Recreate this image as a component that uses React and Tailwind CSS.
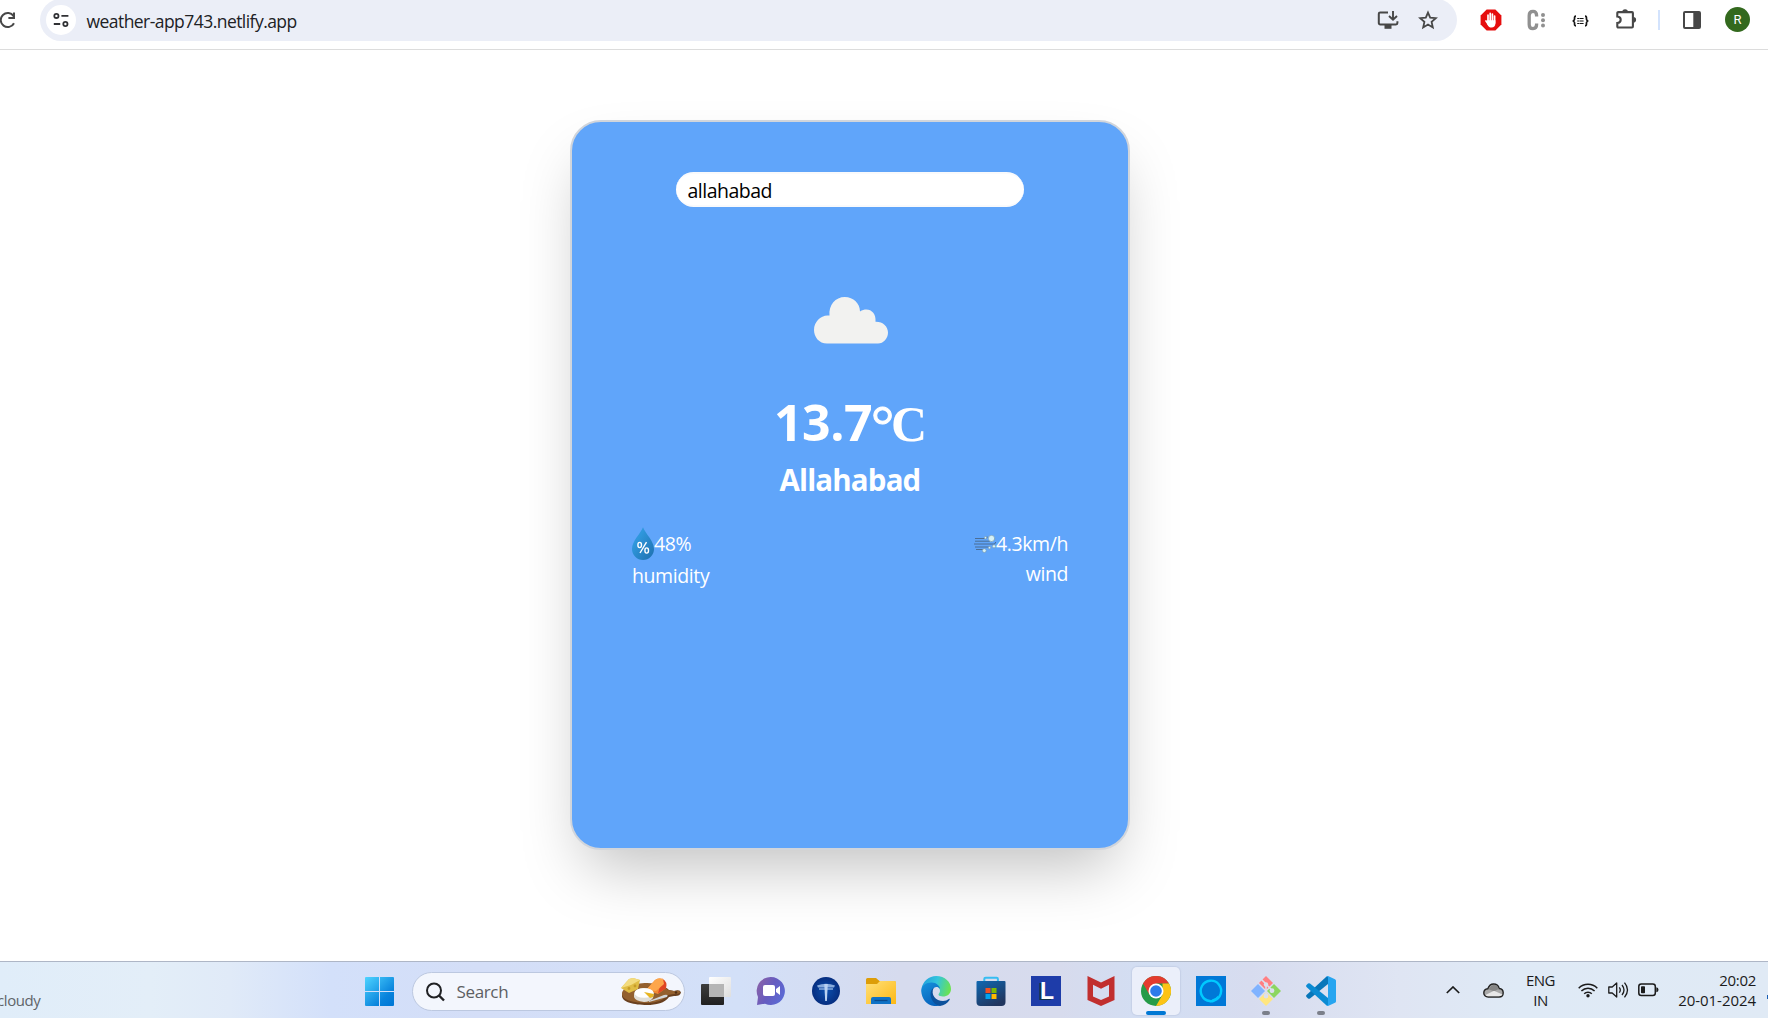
import React from "react";

const Reload = () => (
  <svg className="-ml-[1px] h-[18px] w-[18px] shrink-0" viewBox="0 0 18 18" fill="none" stroke="#474747" strokeWidth="2">
    <path d="M14.6 5.2A7 7 0 1 0 15 12.2" />
    <path d="M15 1.5V7H9.4" />
  </svg>
);

const Tune = () => (
  <svg className="h-4 w-4" viewBox="0 0 16 16" fill="none" stroke="#303134" strokeWidth="1.8">
    <circle cx="3.4" cy="3.9" r="2.1" />
    <path d="M8.4 3.9H15.4M0.8 12H7.2" />
    <circle cx="12.4" cy="12" r="2.1" />
  </svg>
);

const Install = () => (
  <svg className="h-5 w-[22px]" viewBox="0 0 22 20" fill="none" stroke="#474747" strokeWidth="2">
    <path d="M11 2.4H3.2A1.4 1.4 0 0 0 1.8 3.8V13a1.4 1.4 0 0 0 1.4 1.4H19a1.4 1.4 0 0 0 1.4-1.4V11.2" />
    <path d="M16 1v8.4M12 6l4 3.8L20 6" strokeWidth="1.9" />
    <path d="M7.5 15h7v3.8h-7z" fill="#474747" stroke="none" />
  </svg>
);

const Star = () => (
  <svg className="h-5 w-5" viewBox="0 0 20 20" fill="none" stroke="#474747" strokeWidth="1.8">
    <path d="M10 2.6l2.2 5.1 5.6.5-4.2 3.7 1.2 5.5-4.8-2.9-4.8 2.9 1.2-5.5-4.2-3.7 5.6-.5z" />
  </svg>
);

const Blocker = () => (
  <svg className="h-[22px] w-[22px]" viewBox="0 0 22 22">
    <path d="M6.6.6h8.8l6 6v8.8l-6 6H6.6l-6-6V6.6z" fill="#e60d0d" />
    <g stroke="#fff" strokeWidth="1.7" strokeLinecap="round">
      <path d="M8 6.2v7M10.2 4.4v8M12.4 5v8M14.6 7v7" />
      <path d="M6 12l3 4.2" />
    </g>
    <path d="M7.300 11.2h8.100v3.400c0 2.800-1.600 4-3.800 4-2 0-3-.8-4.300-3.200z" fill="#fff" />
  </svg>
);

const ColonC = () => (
  <svg className="h-[22px] w-[20px]" viewBox="0 0 20 22">
    <path d="M10.6 7.4V6.4C10.6 3.6 9.2 2.4 7 2.4S3.2 4 3.2 6.6v8.8c0 2.6 1.6 4.2 3.8 4.2s3.6-1.2 3.6-4v-1" fill="none" stroke="#909090" strokeWidth="3.3" />
    <g fill="#909090">
      <circle cx="17" cy="6" r="2" />
      <circle cx="17" cy="11.3" r="2" />
      <circle cx="17" cy="16.6" r="2" />
    </g>
  </svg>
);

const Braces = () => (
  <svg className="h-[12px] w-[17px]" viewBox="0 0 17 12" fill="none" stroke="#161616" strokeWidth="1.7">
    <path d="M4 1.2C2 1.2 2.7 3 2.5 4.4Q2.3 5.8.7 6q1.6.2 1.8 1.6C2.7 9 2 10.8 4 10.8M13 1.2c2 0 1.3 1.8 1.5 3.2q.2 1.4 1.8 1.6-1.6.2-1.8 1.6c-.2 1.4.5 3.2-1.5 3.2" />
    <path d="M5.2 3.5H11.6M5.2 6H11.6M5.2 8.5H11.6" strokeWidth="1.1" strokeDasharray="1.8 .4 4 0" />
  </svg>
);

const Puzzle = () => (
  <svg className="h-[22px] w-[22px]" viewBox="0 0 22 22">
    <path d="M3.4 4.1H17a.9.9 0 0 1 .9.9v13.6a.9.9 0 0 1-.9.9H3.2a.9.9 0 0 1-.9-.9V15c2.2-.1 3.4-1.4 3.4-3.2S4.500 8.700 2.300 8.500V5a.9.9 0 0 1 .9-.9z" fill="none" stroke="#474747" strokeWidth="2.1" />
    <path d="M7.300 4a2.800 2.800 0 0 1 5.600 0zM18.300 9a2.800 2.800 0 0 1 0 5.600z" fill="#474747" />
  </svg>
);

const SidePanel = () => (
  <svg className="h-[18px] w-[18px]" viewBox="0 0 18 18">
    <rect x="1" y="1" width="16" height="16" rx="1" fill="none" stroke="#474747" strokeWidth="2" />
    <path d="M10.300 1H17v16h-6.700z" fill="#474747" />
  </svg>
);

const Toolbar = () => (
  <header className="flex h-[50px] shrink-0 items-start border-b border-[#dcdcdc] bg-white">
    <div className="flex h-[40px] w-[40px] items-center"><Reload /></div>
    <div className="-mt-[1px] flex h-[42px] w-[1417px] items-center rounded-full bg-[#ebeef7]">
      <div className="ml-[6px] flex h-[30px] w-[30px] items-center justify-center rounded-full bg-white"><Tune /></div>
      <span className="ml-[10.5px] pt-[1px] text-[17.500px] leading-[40px] tracking-[-0.550px] text-[#202124]">weather-app743.netlify.app</span>
      <div className="mr-[19px] ml-auto flex items-center gap-[19px]"><Install /><Star /></div>
    </div>
    <div className="flex h-[40px] items-center">
      <div className="ml-[22.500px]"><Blocker /></div>
      <div className="ml-[24px]"><ColonC /></div>
      <div className="ml-[26px] pt-[1px]"><Braces /></div>
      <div className="ml-[26.500px] -mt-[2px]"><Puzzle /></div>
      <div className="ml-[21px] h-[20px] w-[2px] bg-[#d3e3fd]" />
      <div className="ml-[23px]"><SidePanel /></div>
      <div className="-mt-[1px] ml-[24px] flex h-[25px] w-[25px] items-center justify-center rounded-full bg-[#33691e] font-['Roboto'] text-[13px] text-white">R</div>
    </div>
  </header>
);

const Cloud = () => (
  <svg className="h-[47px] w-[74px]" viewBox="0 0 74 47">
    <path d="M13 46.500C5 46.500 0 40 0 33 0 25 6.500 18.500 13.500 18.500h2C14.500 8 21.500 0 30.800 0 39.500 0 46 6.500 46 14.500c8-5 16.500 0 15.500 10.200C69 24.500 74 29.500 74 35.500c0 6-4.500 11-10 11z" fill="#f2f2f0" />
  </svg>
);

const Drop = () => (
  <svg className="h-[33px] w-[22px]" viewBox="0 0 22 33">
    <defs>
      <linearGradient id="drop" x1="0" y1="0" x2="1" y2="1">
        <stop offset=".3" stopColor="#2f97dc" />
        <stop offset="1" stopColor="#1e6fae" />
      </linearGradient>
    </defs>
    <path d="M11 .3C13.500 7 22 14 22 22a11 11 0 0 1-22 0C0 14 8.500 7 11 .3z" fill="url(#drop)" />
    <g fill="none" stroke="#fff" strokeWidth="1.400">
      <ellipse cx="7.700" cy="18" rx="1.800" ry="2.600" />
      <ellipse cx="14.700" cy="23.500" rx="1.800" ry="2.600" />
      <path d="M14.500 15.200L8 26" />
    </g>
  </svg>
);

const Wind = () => (
  <svg className="h-[18px] w-[22px]" viewBox="0 0 22 18">
    <g fill="none" stroke="#48688a" strokeWidth=".9">
      <path d="M1 3.500h10.500q2 0 1.500-2M1 6.200h15M0 9h20q2-.5 1.500-2M1 12h14.500M2 14.500h7q2 0 1.500 2M17 6q3.500 0 3.500-3" />
    </g>
    <g fill="#d6f2f7" stroke="#7795a8" strokeWidth=".6">
      <circle cx="17.500" cy="3.400" r="3.100" />
      <circle cx="11.500" cy="2.700" r="1.200" />
      <circle cx="20" cy="11.300" r="1.600" />
      <circle cx="15.500" cy="12.700" r="1.200" />
      <circle cx="10.300" cy="15.600" r="1.900" />
    </g>
  </svg>
);

const WeatherCard = () => (
  <section className="mt-[70px] ml-[570px] flex h-[730px] w-[560px] flex-col items-center rounded-[31px] border-2 border-[#d1d5db] bg-[#60a5fa] text-white shadow-[0_31px_62px_-15px_rgba(0,0,0,0.25)]">
    <input
      readOnly
      value="allahabad"
      className="mt-[50px] h-[35px] w-[348px] rounded-[18px] border-y-2 border-[#f9fafc] bg-white px-[11.500px] pt-[2px] text-[19.500px] tracking-[-0.500px] text-black outline-none"
    />
    <div className="mt-[90px] ml-[2px] h-[47px]"><Cloud /></div>
    <h1 className="mt-[44px] flex h-[68px] items-baseline justify-center text-[50px] leading-[68px] font-bold">
      <span className="tracking-[-0.500px]">13.7</span>
      <span className="-ml-[1px] flex items-baseline font-['Liberation_Serif']">
        <span className="relative top-[4px] w-[20px] text-[58px] leading-none font-normal [-webkit-text-stroke:1px_white]">°</span>
        <span className="w-[35px] text-[50px] leading-none">C</span>
      </span>
    </h1>
    <h2 className="mt-[4px] text-[29.500px] leading-[40px] font-bold tracking-[-0.850px]">Allahabad</h2>
    <div className="mt-[27px] flex w-[436px] justify-between text-[19.500px] tracking-[-0.400px]">
      <div>
        <div className="flex h-[33px] items-center"><Drop /><span className="leading-[33px]">48%</span></div>
        <p className="leading-[31px]">humidity</p>
      </div>
      <div className="text-right">
        <div className="flex h-[33px] items-center"><Wind /><span className="leading-[33px]">4.3km/h</span></div>
        <p className="-mt-[2px] leading-[31px]">wind</p>
      </div>
    </div>
  </section>
);

const WinLogo = () => (
  <svg className="h-[29px] w-[29px]" viewBox="0 0 29 29">
    <defs>
      <linearGradient id="win" gradientUnits="userSpaceOnUse" x1="0" y1="0" x2="26" y2="28">
        <stop stopColor="#4fd4ff" />
        <stop offset=".75" stopColor="#0883dc" />
        <stop offset="1" stopColor="#0078d6" />
      </linearGradient>
    </defs>
    <path d="M1 0h13v14H0V1a1 1 0 0 1 1-1zM15 0h13a1 1 0 0 1 1 1v13H15zM0 15h14v14H1a1 1 0 0 1-1-1zM15 15h14v13a1 1 0 0 1-1 1H15z" fill="url(#win)" />
  </svg>
);

const SearchIcon = () => (
  <svg className="h-[20px] w-[20px]" viewBox="0 0 20 20" fill="none" stroke="#202124" strokeWidth="2">
    <circle cx="9" cy="8.500" r="7" />
    <path d="M14 13.500l5 5" strokeWidth="2.400" />
  </svg>
);

const Cheese = () => (
  <svg className="h-[30px] w-[61px]" viewBox="0 0 61 30">
    <path d="M2 19c0-8 13-12 26-12 9 0 17 2 21 6l5 1q6-2 7 1.500-1 4-7 3.500l-5 1c-4 6-13 8-22 8-13 0-25-3-25-9z" fill="#69401f" />
    <path d="M2 17C2 10 14 6 27 6c10 0 18 3 21 7l6 1q6-1 6 1t-6 2l-6 1c-4 5-12 8-21 8-13 0-25-3-25-9z" fill="#93602f" />
    <circle cx="56" cy="15.500" r="1.300" fill="#4f2e15" />
    <path d="M1 11L9 2l4-1 7 2-2 9-9 4z" fill="#e0bd45" />
    <path d="M1 11L9 2l4-1 7 2-9 5z" fill="#f3dc80" />
    <circle cx="9" cy="11.500" r="1.400" fill="#c79c28" /><circle cx="15" cy="9" r="1.400" fill="#c79c28" />
    <path d="M27 12l8-9q9-5 11 8l-8 6q-6-1-11-5z" fill="#f08a35" />
    <path d="M42 1.500q6 3 4 10l-8 5z" fill="#df4524" />
    <path d="M27 12l8-9q4-3 8-1l1 5-8 7q-5 0-9-2z" fill="#fda64b" />
    <path d="M14 17q1-5 9-6 9 0 11 5l-1 5q-3 4-9 4-9-1-10-5z" fill="#e0ded8" />
    <ellipse cx="24" cy="16" rx="9.500" ry="4.800" fill="#fff" />
    <path d="M24 15l10 2-1 3-3 1z" fill="#e8b522" />
    <path d="M29 24l15-6q5-1 3 2l-11 3-7 2z" fill="#d3d7da" />
  </svg>
);

const TaskView = () => (
  <svg className="h-[30px] w-[30px]" viewBox="0 0 30 30">
    <defs>
      <linearGradient id="tvb" x2="0" y2="1"><stop stopColor="#3d3d3d" /><stop offset="1" stopColor="#202020" /></linearGradient>
      <linearGradient id="tvw" x2="1" y2="1"><stop stopColor="#fff" /><stop offset="1" stopColor="#dedede" /></linearGradient>
    </defs>
    <rect x="0" y="8" width="23" height="21" rx="1" fill="url(#tvb)" />
    <rect x="8" y="1" width="22" height="20" rx="1" fill="url(#tvw)" />
    <path d="M8 8h15v13H9q-1 0-1-1z" fill="#b5b5b5" />
  </svg>
);

const Chat = () => (
  <svg className="h-[30px] w-[30px]" viewBox="0 0 30 30">
    <defs>
      <linearGradient id="chat" x1="0" y1=".2" x2="1" y2=".7"><stop stopColor="#8b62a7" /><stop offset=".5" stopColor="#665cc0" /><stop offset="1" stopColor="#5a6bd6" /></linearGradient>
    </defs>
    <path d="M15 1a14 14 0 1 1-6 26.700L1 29l1-8A14 14 0 0 1 15 1z" fill="url(#chat)" />
    <rect x="7" y="9" width="12" height="11" rx="2" fill="#fff" />
    <path d="M20 13l4-3v9l-4-3z" fill="#fff" />
  </svg>
);

const TApp = () => (
  <svg className="h-[30px] w-[30px]" viewBox="0 0 30 30">
    <defs><radialGradient id="tapp"><stop stopColor="#0b4fae" /><stop offset="1" stopColor="#062e80" /></radialGradient></defs>
    <circle cx="15" cy="15" r="14" fill="url(#tapp)" />
    <path d="M6 9.500q9-3.500 18 0l-1 2H7z" fill="#a9c8ef" opacity=".8" />
    <path d="M8 13h14" stroke="#a9c8ef" strokeWidth="1.200" />
    <path d="M13.300 8h3.500l-.9 17h-1.700z" fill="#b9d2f2" />
  </svg>
);

const Folder = () => (
  <svg className="h-[30px] w-[30px]" viewBox="0 0 30 30">
    <defs><linearGradient id="fold" x2="1" y2="1"><stop stopColor="#ffe07a" /><stop offset="1" stopColor="#fdb813" /></linearGradient></defs>
    <path d="M0 3.500Q0 2 1.500 2H10l3.500 3H28q2 0 2 2v5H0z" fill="#dd9d08" />
    <path d="M0 8h11l3-3h14.500Q30 5 30 6.500V28H0z" fill="url(#fold)" />
    <path d="M5 28v-5q0-2 2-2h16q2 0 2 2v5z" fill="#0f72c6" />
    <path d="M8.500 24.500h13" stroke="#0a4a8c" strokeWidth="1.300" />
  </svg>
);

const Edge = () => (
  <svg className="h-[30px] w-[30px]" viewBox="0 0 30 30">
    <defs>
      <linearGradient id="e1" x1="0" y1=".3" x2="1" y2=".5"><stop stopColor="#229fdd" /><stop offset=".5" stopColor="#33c5dc" /><stop offset="1" stopColor="#6be34f" /></linearGradient>
      <linearGradient id="e2" x2=".5" y2="1"><stop stopColor="#1792dc" /><stop offset="1" stopColor="#0763bd" /></linearGradient>
    </defs>
    <path d="M.5 12.500C2 5 8 0 15.200 0 24 0 30 6 30 13c0 5-4 7.500-8 7.500-5 0-5-2-3.800-3.200 2.500-3-1-8.300-6.200-8.300C6 9 1.200 12 .5 12.500z" fill="url(#e1)" />
    <path d="M.2 15C0 10 5 6.500 10.500 6.500c5 0 8.500 3.500 8.500 6.500-2-3-6-2.500-7.500.5C8.500 19 13 27 20 29 9 33 .8 25 .2 15z" fill="url(#e2)" />
    <path d="M12.800 11.500C9 19 15 25 22 25q3.500 0 5.800-2c.8-.5 1.200.2.7 1-2 3-5.300 5.500-9.500 6C10 28 6.500 16 12.800 11.500z" fill="#0c519c" />
  </svg>
);

const Store = () => (
  <svg className="h-[30px] w-[30px]" viewBox="0 0 30 30">
    <defs><linearGradient id="store" x2=".6" y2="1"><stop stopColor="#0f68b2" /><stop offset="1" stopColor="#21365f" /></linearGradient></defs>
    <path d="M8.300 6V3q0-1.300 1.300-1.300h11q1.300 0 1.300 1.300v3" fill="none" stroke="#36bdf2" strokeWidth="2" />
    <path d="M.5 6q0-1 1-1h27q1 0 1 1v20q0 4-4 4h-21q-4 0-4-4z" fill="url(#store)" />
    <path d="M9.500 12h5v5h-5z" fill="#f25022" /><path d="M15.500 12h5v5h-5z" fill="#7fba00" />
    <path d="M9.500 18h5v5h-5z" fill="#00a4ef" /><path d="M15.500 18h5v5h-5z" fill="#ffb900" />
  </svg>
);

const LApp = () => (
  <div className="flex h-[30px] w-[30px] items-center justify-center bg-[#1e3ca9] pl-[2px] font-['Liberation_Sans'] text-[23px] leading-[28px] font-bold text-white [text-shadow:-2px_1px_0_#10324d]">L</div>
);

const McAfee = () => (
  <svg className="h-[30px] w-[30px]" viewBox="0 0 30 30">
    <path d="M1.500 0L15 6.500 28.500 0v24L15 30 1.500 24z" fill="#c12f2e" />
    <path d="M7 8.800l8 4 8-4v11.600L15 24l-8-3.600z" fill="#d5dcf0" />
  </svg>
);

const Chrome = () => (
  <svg className="h-[30px] w-[30px]" viewBox="0 0 30 30">
    <circle cx="15" cy="15" r="15" fill="#259b48" />
    <path d="M2 7.500A15 15 0 0 1 28 7.500H15L8.500 18.700z" fill="#e33b2e" />
    <path d="M28 7.500A15 15 0 0 1 15 30l6.500-11.300V7.500z" fill="#fdc315" />
    <circle cx="15" cy="15" r="7.500" fill="#fff" />
    <circle cx="15" cy="15" r="5.800" fill="#2c7bea" />
  </svg>
);

const Alexa = () => (
  <svg className="h-[30px] w-[30px]" viewBox="0 0 30 30">
    <path d="M0 0h30v30H0z" fill="#0078d7" />
    <path d="M13.800 25A10.200 10.200 0 1 1 18 24.600Q15 26 13.800 25z" fill="none" stroke="#00caff" strokeWidth="2.400" />
    <path d="M14 26.300q.2-2 2.500-3 4-1.500 6-4-1 6-8.500 7z" fill="#00caff" />
  </svg>
);

const Git = () => (
  <svg className="h-[30px] w-[30px]" viewBox="0 0 30 30">
    <path d="M15 0l7 7-7 7-7-7z" fill="#ff7f82" />
    <path d="M7 8l7 7-7 7-7-7z" fill="#80b3ff" />
    <path d="M23 8l7 7-7 7-7-7z" fill="#8dd65f" />
    <path d="M15 16l7 7-7 7-7-7z" fill="#ffe680" />
    <path d="M10.500 3.500l4.500 4.500v11M15 8l6 6.500" fill="none" stroke="#dbe0ed" strokeWidth="1.600" />
    <g fill="#dbe0ed"><circle cx="15" cy="8.500" r="2.200" /><circle cx="15" cy="20" r="2.400" /><circle cx="21" cy="14.700" r="2.400" /></g>
  </svg>
);

const VSCode = () => (
  <svg className="h-[30px] w-[30px]" viewBox="0 0 30 30">
    <path d="M22 0v8L4 22.500q-1 .7-2 0L.5 21q-.8-1 0-2L20 1z" fill="#0876b9" />
    <path d="M22 30v-8L4 7.500q-1-.7-2 0L.5 9q-.8 1 0 2L20 29z" fill="#0b8bd3" />
    <path d="M22 0l7 3.300q1 .5 1 1.500v20.400q0 1-1 1.500L22 30q-1 .2-2-1 2 1 2-1V2q0-2-2-1 1-1.200 2-1z" fill="#27a5f0" />
  </svg>
);

const apps = [
  { name: "tasks", Icon: TaskView },
  { name: "chat", Icon: Chat },
  { name: "tapp", Icon: TApp },
  { name: "folder", Icon: Folder },
  { name: "edge", Icon: Edge },
  { name: "store", Icon: Store },
  { name: "lapp", Icon: LApp },
  { name: "mcafee", Icon: McAfee },
  { name: "chrome", Icon: Chrome, active: true },
  { name: "alexa", Icon: Alexa },
  { name: "git", Icon: Git, running: true },
  { name: "vscode", Icon: VSCode, running: true },
];

const AppSlot = ({ Icon, active, running }) => (
  <div className="flex w-[55px] justify-center">
    <div className={active ? "flex h-[48px] w-[48px] flex-col items-center rounded-[5px] bg-[#ebeffa] pt-[9px] shadow-[0_0_1px_1px_rgba(190,200,225,0.6)]" : "flex h-[48px] w-[48px] flex-col items-center pt-[9px]"}>
      <Icon />
      {active && <div className="mt-[5px] h-[4px] w-[20px] rounded-full bg-[#0078d4]" />}
      {running && <div className="mt-[5px] h-[4px] w-[8px] rounded-full bg-[#7b7f8a]" />}
    </div>
  </div>
);

const Chevron = () => (
  <svg className="h-[8px] w-[14px]" viewBox="0 0 14 8" fill="none" stroke="#1b1b1b" strokeWidth="1.700"><path d="M.8 7L7 1l6.200 6" /></svg>
);

const OneDrive = () => (
  <svg className="h-[15px] w-[21px]" viewBox="0 0 21 15">
    <path d="M5.200 14C2.500 14 .8 12.300.8 10s1.700-4 4-4.200C6 2.500 8 1 10.500 1c3 0 5 1.700 5.700 4.500 2.500.3 4 2 4 4.200 0 2.500-1.700 4.300-4.200 4.300z" fill="#a9a9a9" stroke="#222" strokeWidth="1.400" />
    <path d="M5.500 6.200Q8 2 11 1.700c3 0 4 2 4.800 4.300L11 8.200z" fill="#858585" />
    <path d="M2.500 12l8.500-4.300 8.500 3.800q-1 1.800-3.500 1.800H5q-1.500 0-2.500-1.300z" fill="#e8e8e8" />
  </svg>
);

const Wifi = () => (
  <svg className="h-[16px] w-[20px]" viewBox="0 0 20 16" fill="none" stroke="#1b1b1b" strokeWidth="1.500">
    <path d="M.7 6.200a13 13 0 0 1 18.600 0M3.400 9a9.300 9.300 0 0 1 13.200 0M6.200 11.700a5.400 5.400 0 0 1 7.600 0" />
    <circle cx="10" cy="13.800" r="1.700" fill="#1b1b1b" stroke="none" />
  </svg>
);

const Speaker = () => (
  <svg className="h-[18px] w-[21px]" viewBox="0 0 21 18" fill="none" stroke="#1b1b1b" strokeWidth="1.300">
    <path d="M.8 6h3.400l4.500-4v14l-4.500-4H.8z" strokeLinejoin="round" />
    <path d="M11.300 6.300q2 2.700 0 5.400M14 4q4 5 0 10M16.500 1.700q6 7.300 0 14.600" />
  </svg>
);

const Battery = () => (
  <svg className="h-[14px] w-[21px]" viewBox="0 0 21 14">
    <rect x=".8" y="1" width="16.500" height="11.500" rx="2.500" fill="none" stroke="#1b1b1b" strokeWidth="1.500" />
    <rect x="3" y="3.200" width="4" height="7.100" rx=".8" fill="#1b1b1b" />
    <path d="M18.300 4.300q2.200.2 2.200 2.400t-2.200 2.500z" fill="#1b1b1b" />
  </svg>
);

const Taskbar = () => (
  <footer className="flex h-[57px] shrink-0 border-t border-[#aeb6c6] bg-[linear-gradient(90deg,#e0edf9_0px,#e3eef8_150px,#e0eaf8_230px,#d3e0fa_330px,#d4def7_480px,#d3e0f8_740px,#d6dbee_900px,#d7dbed_1060px,#d2def3_1150px,#d7dcef_1250px,#dfe5f3_1400px,#dfeaf6_1520px,#e0eaf5_1768px)]">
    <div className="flex w-[365px] items-end">
      <span className="-ml-[3px] pb-[8px] text-[15px] leading-[20px] tracking-[-0.400px] text-[#5f6468]">cloudy</span>
    </div>
    <div className="pt-[15px]"><WinLogo /></div>
    <div className="mt-[10px] ml-[17.500px] flex h-[39px] w-[273.500px] items-center rounded-full border border-[#bcc8e0] bg-[#f3f6fd]">
      <div className="ml-[12.500px]"><SearchIcon /></div>
      <span className="ml-[11.500px] text-[17px] leading-[37px] tracking-[-0.350px] text-[#5d5f63]">Search</span>
      <div className="mr-[3.500px] ml-auto"><Cheese /></div>
    </div>
    <nav className="ml-[3.500px] flex pt-[5px]">
      {apps.map((a) => <AppSlot key={a.name} {...a} />)}
    </nav>
    <div className="ml-[97.500px] flex h-[56px] items-center text-[#1b1b1b]">
      <Chevron />
      <div className="ml-[22.500px]"><OneDrive /></div>
      <div className="ml-[19px] w-[36px] text-center text-[15px] leading-[20px] tracking-[-0.500px]"><p>ENG</p><p>IN</p></div>
      <div className="ml-[19px]"><Wifi /></div>
      <div className="ml-[10px]"><Speaker /></div>
      <div className="ml-[9px]"><Battery /></div>
      <div className="ml-[6px] w-[91.500px] text-right text-[15px] leading-[20px] tracking-[-0.050px]"><p className="tracking-[-0.300px]">20:02</p><p>20-01-2024</p></div>
    </div>
    <div className="mt-[33px] ml-auto h-[4px] w-[1px] bg-[#1a5fb4]" />
  </footer>
);

export default function App() {
  return (
    <div className="flex h-[1018px] w-[1768px] flex-col overflow-hidden bg-white font-['Open_Sans',sans-serif]">
      <Toolbar />
      <main className="min-h-0 flex-1"><WeatherCard /></main>
      <Taskbar />
    </div>
  );
}
